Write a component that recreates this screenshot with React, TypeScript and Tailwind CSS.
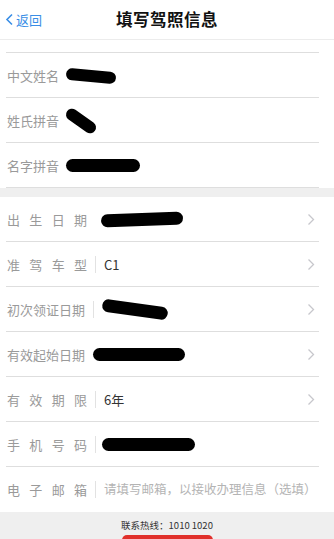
import React from 'react';

const font = { fontFamily: '"Noto Sans CJK SC", "Noto Sans", sans-serif' };

type Blob = { w: number; h: number; rotate: number; ml: number };

const Chevron = () => (
  <svg width="8" height="13" viewBox="0 0 8 13" className="shrink-0">
    <path d="M1.5 1.5 L6.5 6.5 L1.5 11.5" fill="none" stroke="#c7c7cc" strokeWidth="1.3" />
  </svg>
);

const Redact: React.FC<{ b: Blob }> = ({ b }) => (
  <div
    className="bg-black rounded-full shrink-0"
    style={{ width: b.w, height: b.h, transform: `rotate(${b.rotate}deg)`, marginLeft: b.ml }}
  />
);

const Label: React.FC<{ text: string; spread?: boolean }> = ({ text, spread }) => {
  if (spread) {
    return (
      <div className="w-[80px] flex justify-between shrink-0 text-[13px] text-[#9a9a9a]">
        {text.split('').map((c, i) => (
          <span key={i}>{c}</span>
        ))}
      </div>
    );
  }
  return <div className="shrink-0 text-[13px] text-[#9a9a9a] whitespace-nowrap">{text}</div>;
};

const Row: React.FC<{
  label: string;
  spread?: boolean;
  value?: string;
  placeholder?: string;
  blob?: Blob;
  sep?: boolean;
  chevron?: boolean;
  divider?: boolean;
}> = ({ label, spread, value, placeholder, blob, sep, chevron, divider = true }) => (
  <div className="h-[45px] shrink-0 pl-[7px] pr-[19px] relative flex items-center">
    <Label text={label} spread={spread} />
    {sep && <div className="w-px h-[17px] bg-[#e2e2e2] ml-[8px] shrink-0" />}
    {blob && <Redact b={blob} />}
    {value && <span className="ml-[8px] text-[13px] text-[#333]">{value}</span>}
    {placeholder && <span className="ml-[8px] text-[12.5px] text-[#b4b4b4] whitespace-nowrap">{placeholder}</span>}
    <div className="flex-1" />
    {chevron && <Chevron />}
    {divider && <div className="absolute left-[6px] right-[15px] bottom-0 h-px bg-[#dedede]" />}
  </div>
);

export default function App() {
  return (
    <div className="w-[334px] h-[539px] bg-white overflow-hidden flex flex-col" style={font}>
      <header className="h-[40px] shrink-0 flex items-center relative border-b border-[#ececec]">
        <div className="absolute left-[5px] flex items-center gap-[2px] text-[#3a8ee6] text-[13px]">
          <svg width="9" height="13" viewBox="0 0 9 13">
            <path d="M7 1.5 L2 6.5 L7 11.5" fill="none" stroke="#3a8ee6" strokeWidth="1.6" />
          </svg>
          <span>返回</span>
        </div>
        <h1 className="flex-1 text-center text-[16.5px] font-bold text-[#111] tracking-[0.5px]">填写驾照信息</h1>
      </header>

      <div className="h-[13px] shrink-0 relative">
        <div className="absolute left-[6px] right-[15px] bottom-0 h-px bg-[#dedede]" />
      </div>

      <Row label="中文姓名" blob={{ w: 50, h: 12, rotate: 5, ml: 7 }} />
      <Row label="姓氏拼音" blob={{ w: 34, h: 12, rotate: 35, ml: 5 }} />
      <Row label="名字拼音" blob={{ w: 74, h: 13, rotate: 0, ml: 7 }} />

      <div className="h-[9px] shrink-0 bg-[#efefef]" />

      <Row label="出生日期" spread blob={{ w: 82, h: 13, rotate: -2, ml: 14 }} chevron />
      <Row label="准驾车型" spread sep value="C1" chevron />
      <Row label="初次领证日期" sep blob={{ w: 66, h: 13, rotate: 8, ml: 8 }} chevron />
      <Row label="有效起始日期" blob={{ w: 92, h: 13, rotate: 0, ml: 8 }} chevron />
      <Row label="有效期限" spread sep value="6年" chevron />
      <Row label="手机号码" spread sep blob={{ w: 93, h: 13, rotate: 0, ml: 6 }} />
      <Row label="电子邮箱" spread sep placeholder="请填写邮箱，以接收办理信息（选填）" divider={false} />

      <footer className="flex-1 bg-[#efefef] flex flex-col items-center pt-[8px]">
        <div className="text-[9.5px] text-[#333] leading-[10px]">联系热线：1010 1020</div>
        <div className="mt-[5px] shrink-0 w-[91px] h-[10px] bg-[#e0302b] rounded-t-[5px]" />
      </footer>
    </div>
  );
}
